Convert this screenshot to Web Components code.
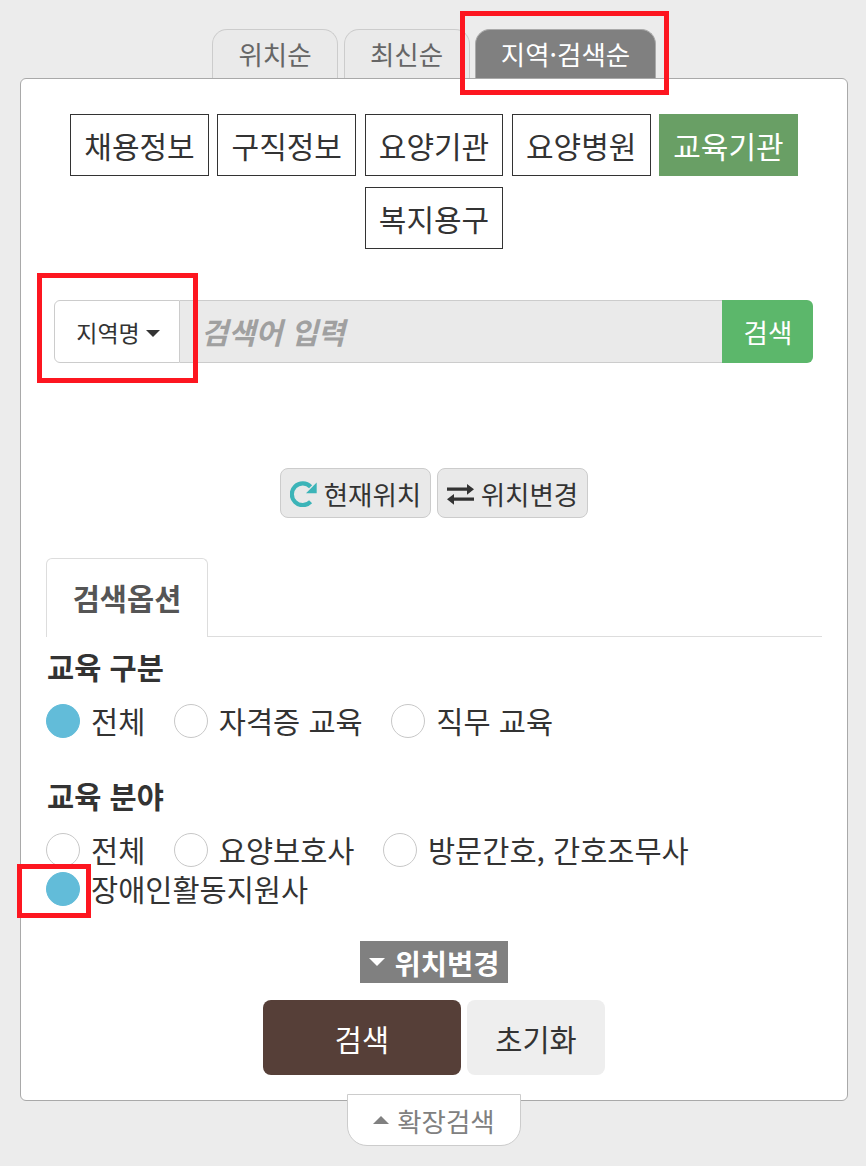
<!DOCTYPE html>
<html lang="ko">
    <head>
        <meta charset="UTF-8" />
        <title>검색옵션</title>
        <style>
            html, body { margin: 0; background: #ececec; }
            body {
                width: 866px;
                height: 1166px;
                overflow: hidden;
                position: relative;
                font-family: "Noto Sans CJK KR", "Noto Sans", sans-serif;
                color: #333;
            }
        </style>
    </head>
    <body>
        <search-page>
            <sort-tabs slot="tabs">
                <sort-tab>위치순</sort-tab>
                <sort-tab>최신순</sort-tab>
                <sort-tab active>지역·검색순</sort-tab>
            </sort-tabs>
            <cat-list>
                <cat-button>채용정보</cat-button>
                <cat-button>구직정보</cat-button>
                <cat-button>요양기관</cat-button>
                <cat-button>요양병원</cat-button>
                <cat-button active>교육기관</cat-button>
                <cat-button>복지용구</cat-button>
            </cat-list>
            <search-bar></search-bar>
            <loc-buttons>
                <loc-button>
                    <svg slot="icon" width="27" height="26" viewBox="0 0 27 26">
                        <path d="M20.6 20.8A10.900 10.900 0 1 1 20.600 5.700" fill="none" stroke="#3cb4b8" stroke-width="4.200" />
                        <path d="M26.700 1.500V12.300H16z" fill="#3cb4b8" />
                    </svg>
                    현재위치
                </loc-button>
                <loc-button>
                    <svg slot="icon" width="27" height="26" viewBox="0 0 27 26">
                        <path d="M0 6.500h20V3l7 5.300-7 5.400V9.700H0zM27 16.500H7V13l-7 5.300 7 5.400v-4h20z" fill="#333" />
                    </svg>
                    위치변경
                </loc-button>
            </loc-buttons>
            <option-tabs>검색옵션</option-tabs>
            <radio-group label="교육 구분">
                <radio-item checked>전체</radio-item>
                <radio-item>자격증 교육</radio-item>
                <radio-item>직무 교육</radio-item>
            </radio-group>
            <radio-group label="교육 분야">
                <radio-item>전체</radio-item>
                <radio-item>요양보호사</radio-item>
                <radio-item>방문간호, 간호조무사</radio-item>
                <radio-item checked>장애인활동지원사</radio-item>
            </radio-group>
            <toggle-badge>위치변경</toggle-badge>
            <form-actions>
                <action-button primary>검색</action-button>
                <action-button>초기화</action-button>
            </form-actions>
            <expand-tab slot="after">확장검색</expand-tab>
        </search-page>

        <!-- red annotation boxes drawn over the shot -->
        <mark-box style="left: 460px; top: 11px; width: 209px; height: 84px"></mark-box>
        <mark-box style="left: 37px; top: 273px; width: 161px; height: 110px"></mark-box>
        <mark-box style="left: 17px; top: 864px; width: 74px; height: 54px"></mark-box>

        <script>
            // small helper: every element just clones its markup into an open shadow root
            function component(name, css, html) {
                const template = document.createElement("template");
                template.innerHTML = `<style>${css}</style>${html}`;
                customElements.define(
                    name,
                    class extends HTMLElement {
                        constructor() {
                            super();
                            this.attachShadow({ mode: "open" }).appendChild(template.content.cloneNode(true));
                        }
                        connectedCallback() {
                            const label = this.shadowRoot.querySelector("[data-label]");
                            if (label) label.textContent = this.getAttribute("label");
                        }
                    }
                );
            }

            component(
                "search-page",
                `:host { display: flex; flex-direction: column; align-items: center; padding: 29px 0 0 2px; }
                 .panel { box-sizing: border-box; width: 828px; height: 1023px; padding: 35px 25px 0;
                          background: #fff; border: 1px solid #a9a9a9; border-radius: 6px; }`,
                `<slot name="tabs"></slot><div class="panel"><slot></slot></div><slot name="after"></slot>`
            );

            component(
                "sort-tabs",
                `:host { display: flex; gap: 5.5px; height: 49px; }`,
                `<slot></slot>`
            );

            component(
                "sort-tab",
                `:host { display: flex; align-items: center; justify-content: center; box-sizing: border-box;
                         width: 126px; height: 49px; font-size: 26.5px; color: #666; padding-bottom: 2px;
                         background: #eaeaea; border: 1px solid #ccc; border-bottom: 0;
                         border-radius: 15px 15px 0 0; }
                 :host([active]) { width: 181px; background: #808080; color: #fff; border-color: #aaa; }`,
                `<slot></slot>`
            );

            component(
                "cat-list",
                `:host { display: flex; flex-wrap: wrap; justify-content: center; gap: 11px 8.45px; margin: 0 8px; }`,
                `<slot></slot>`
            );

            component(
                "cat-button",
                `:host { display: flex; align-items: center; justify-content: center; box-sizing: border-box;
                         width: 138.8px; height: 62px; padding-bottom: 1px; font-size: 30px; color: #333;
                         background: #fff; border: 1px solid #333; }
                 :host([active]) { background: #699f65; border-color: #699f65; color: #fff; }`,
                `<slot></slot>`
            );

            component(
                "search-bar",
                `:host { display: flex; height: 63px; margin: 51px 9px 0 8px; }
                 .drop { box-sizing: border-box; width: 126px; display: flex; align-items: center; justify-content: center;
                         gap: 6px; padding-left: 2px; background: #fff; border: 1px solid #ccc; border-radius: 6px 0 0 6px;
                         font-size: 23px; color: #333; }
                 .drop i { width: 0; height: 0; border: 7px solid transparent; border-top-color: #333;
                           border-bottom: 0; margin-top: 3px; }
                 .input { flex: 1; box-sizing: border-box; display: flex; align-items: center; padding: 0 0 2px 21px;
                          background: #eaeaea; border: 1px solid #ccc; border-left: 0; border-right: 0;
                          font-size: 29.5px; font-weight: 700; font-style: italic; color: #a0a0a0; }
                 .go { width: 91px; box-sizing: border-box; display: flex; align-items: center; justify-content: center;
                       padding-left: 1px; background: #5cb76b; color: #fff; font-size: 26.5px; border-radius: 0 6px 6px 0; }`,
                `<div class="drop">지역명<i></i></div><div class="input">검색어 입력</div><div class="go">검색</div>`
            );

            component(
                "loc-buttons",
                `:host { display: flex; justify-content: center; gap: 6px; margin-top: 105px; }`,
                `<slot></slot>`
            );

            component(
                "loc-button",
                `:host { display: flex; align-items: center; justify-content: center; gap: 7px; box-sizing: border-box;
                         width: 151px; height: 50px; background: #e9e9e9; border: 1px solid #ccc;
                         border-radius: 8px; font-size: 26.5px; color: #333; }
                 ::slotted(svg) { flex: none; margin-top: 2px; }`,
                `<slot name="icon"></slot><span><slot></slot></span>`
            );

            component(
                "option-tabs",
                `:host { display: block; margin-top: 40px; height: 79px; box-sizing: border-box;
                         border-bottom: 1px solid #ddd; }
                 .tab { box-sizing: border-box; width: 162px; height: 79px; display: flex; align-items: center;
                        justify-content: center; padding-bottom: 2px; background: #fff; border: 1px solid #ddd;
                        border-bottom: 0; border-radius: 6px 6px 0 0; font-size: 29.5px; font-weight: 700; color: #555; }`,
                `<div class="tab"><slot></slot></div>`
            );

            component(
                "radio-group",
                `:host { display: block; margin-top: 11px; margin-bottom: 39px; }
                 :host(:last-of-type) { margin-bottom: 0; }
                 .label { font-size: 29.5px; font-weight: 700; color: #333; line-height: 36px; padding-left: 1px; }
                 .items { display: flex; flex-wrap: wrap; margin-top: 20px; row-gap: 5px; }`,
                `<div class="label" data-label></div><div class="items"><slot></slot></div>`
            );

            component(
                "radio-item",
                `:host { display: flex; align-items: center; height: 34px; font-size: 29.5px; color: #333; margin-right: 28.5px; }
                 :host(:last-child) { margin-right: 0; }
                 .dot { box-sizing: border-box; width: 34px; height: 34px; border-radius: 50%; margin-right: 11px;
                        background: #fff; border: 1px solid #c8c8c8; flex: none; }
                 :host([checked]) .dot { background: #62bcd9; border-color: #62bcd9; }
                 span.text { padding-bottom: 3px; }`,
                `<span class="dot"></span><span class="text"><slot></slot></span>`
            );

            component(
                "toggle-badge",
                `:host { display: flex; width: 148px; height: 42px; margin: 35px auto 0; align-items: center;
                         justify-content: center; gap: 10px; background: #808080; color: #fff;
                         font-size: 28.5px; font-weight: 700; }
                 i { width: 0; height: 0; border: 8px solid transparent; border-top-color: #fff; border-bottom: 0; }`,
                `<i></i><slot></slot>`
            );

            component(
                "form-actions",
                `:host { display: flex; justify-content: center; gap: 6px; margin-top: 17px; }`,
                `<slot></slot>`
            );

            component(
                "action-button",
                `:host { display: flex; align-items: center; justify-content: center; width: 138px; height: 75px;
                         background: #eee; color: #333; border-radius: 8px; font-size: 29.5px; }
                 :host([primary]) { width: 198px; background: #563f38; color: #fff; }`,
                `<slot></slot>`
            );

            component(
                "expand-tab",
                `:host { display: flex; align-items: center; justify-content: center; gap: 8px; box-sizing: border-box;
                         position: relative; width: 174px; height: 52px; margin-top: -7px; background: #fff;
                         border: 1px solid #ccc; border-radius: 0 0 20px 20px; font-size: 26.5px; color: #808080; }
                 i { width: 0; height: 0; border: 8px solid transparent; border-bottom-color: #808080; border-top: 0; }`,
                `<i></i><slot></slot>`
            );

            component(
                "mark-box",
                `:host { position: absolute; box-sizing: border-box; border: 5px solid #fd1620; }`,
                ``
            );
        </script>
    </body>
</html>
